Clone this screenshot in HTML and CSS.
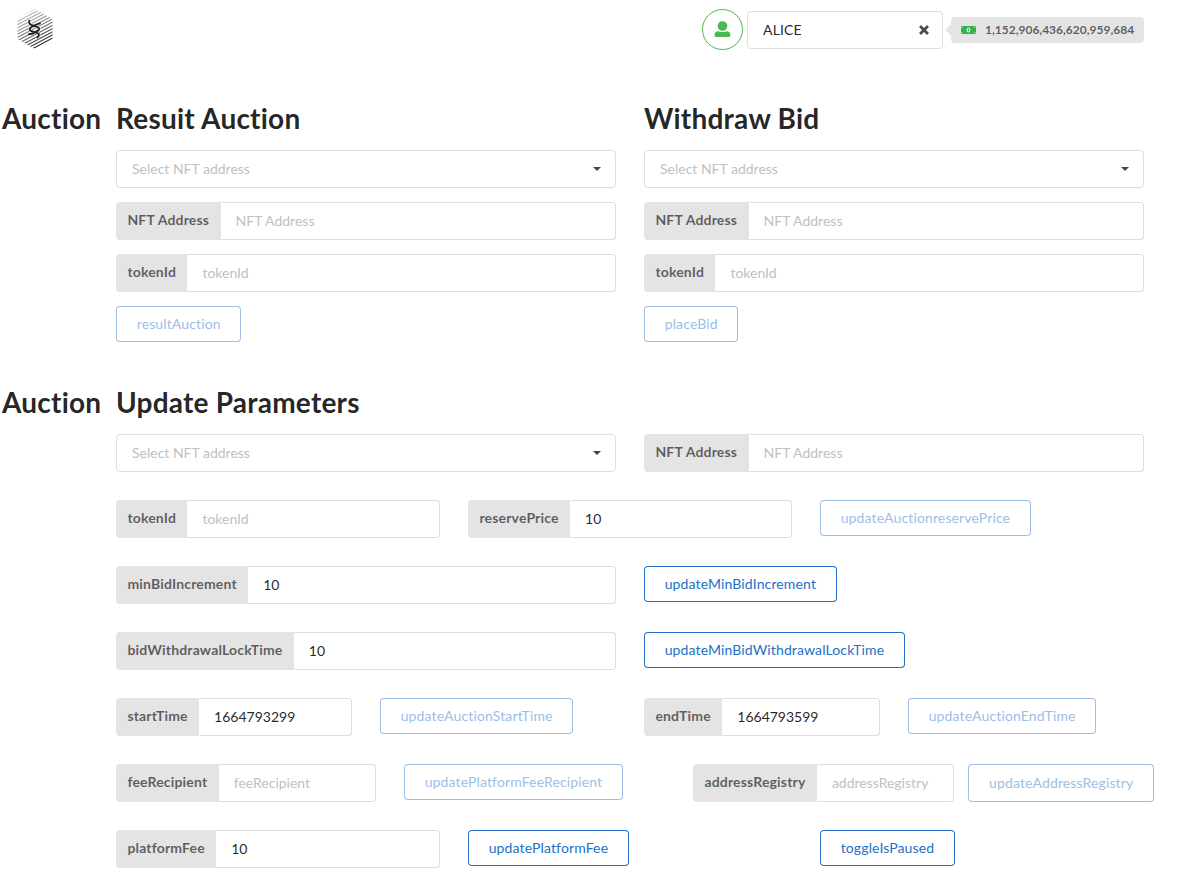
FILE: index.html
```html
<!DOCTYPE html>
<html lang="en">
<head>
<meta charset="utf-8">
<title>Auction</title>
<link rel="stylesheet" href="styles.css">
</head>
<body>
<header class="topbar">
  <svg class="logo" width="38" height="42" viewBox="0 0 38 42">
    <defs>
      <clipPath id="hex"><path d="M19 1 36.500 11V31L19 41 1.500 31V11Z"/></clipPath>
      <linearGradient id="shade" gradientUnits="userSpaceOnUse" x1="8" y1="2" x2="28" y2="40">
        <stop offset="0" stop-color="#ccc"/><stop offset=".45" stop-color="#888"/><stop offset="1" stop-color="#111"/>
      </linearGradient>
    </defs>
    <g clip-path="url(#hex)">
      <path d="M0 11 38-9M0 14.200 38-5.800M0 17.400 38-2.600M0 20.600 38 .6M0 23.800 38 3.800M0 27 38 7M0 30.200 38 10.200M0 33.400 38 13.400M0 36.600 38 16.600M0 39.800 38 19.800M0 43 38 23M0 46.200 38 26.200M0 49.400 38 29.400M0 52.600 38 32.600M0 55.800 38 35.800" stroke="url(#shade)" stroke-width="1.100" fill="none"/>
    </g>
    <g fill="none" stroke-linejoin="round">
      <path d="M13.300 12.700Q12.500 16 16 17.200L21.500 19.200Q24.500 20.800 22 22.700L17 25.500 13 26.300M24 15.200 18.500 17.300 14.500 19.800Q12.500 21.500 15 22.800L21.500 25.200Q24.500 26.500 21.500 29.300" stroke="#fff" stroke-width="3"/>
      <path d="M13.300 12.700Q12.500 16 16 17.200L21.500 19.200Q24.500 20.800 22 22.700L17 25.500 13 26.300M24 15.200 18.500 17.300 14.500 19.800Q12.500 21.500 15 22.800L21.500 25.200Q24.500 26.500 21.500 29.300" stroke="#222" stroke-width="1.900" stroke-linecap="round"/>
    </g>
  </svg>
  <div class="account">
    <span class="avatar">
      <svg width="17" height="17" viewBox="0 0 17 17" fill="#4cb950"><circle cx="8.500" cy="5" r="4.800"/><path d="M.5 14.300C.5 11.500 2 10.200 4.400 10.200Q8.500 12 12.600 10.200C15 10.200 16.500 11.500 16.500 14.300Q16.500 16 15 16H2Q.5 16 .5 14.300Z"/></svg>
    </span>
    <div class="dropdown account-select">
      <span>ALICE</span>
      <svg class="clear" width="10" height="10" viewBox="0 0 10 10"><path d="M2 2 8 8M8 2 2 8" stroke="#4b4b4b" stroke-width="2.800" stroke-linecap="square"/></svg>
    </div>
    <div class="balance">
      <svg width="15" height="8" viewBox="0 0 15 8"><rect width="15" height="8" rx=".7" fill="#2fb344"/><ellipse cx="7.500" cy="4" rx="1.900" ry="2.500" fill="#e5f5e5"/><path d="M7.500 2.700V5.300" stroke="#2fb344"/><path d="M1 2V1H2M13 1H14V2M1 6V7H2M13 7H14V6" fill="none" stroke="#b8e2bd" stroke-width=".8"/></svg>
      <span>1,152,906,436,620,959,684</span>
    </div>
  </div>
</header>

<main>
  <section class="section">
    <h1>Auction</h1>
    <div class="halves">
      <form class="stack">
        <h1>Resuit Auction</h1>
        <div class="dropdown placeholder"><span>Select NFT address</span><i class="caret"></i></div>
        <div class="field"><label>NFT Address</label><input placeholder="NFT Address"></div>
        <div class="field"><label>tokenId</label><input placeholder="tokenId"></div>
        <button type="button" disabled>resultAuction</button>
      </form>
      <form class="stack">
        <h1>Withdraw Bid</h1>
        <div class="dropdown placeholder"><span>Select NFT address</span><i class="caret"></i></div>
        <div class="field"><label>NFT Address</label><input placeholder="NFT Address"></div>
        <div class="field"><label>tokenId</label><input placeholder="tokenId"></div>
        <button type="button" disabled>placeBid</button>
      </form>
    </div>
  </section>

  <section class="section">
    <h1>Auction</h1>
    <div class="parameters">
      <h1>Update Parameters</h1>
      <div class="rows">
        <div class="halves">
          <div class="dropdown placeholder"><span>Select NFT address</span><i class="caret"></i></div>
          <div class="field"><label>NFT Address</label><input placeholder="NFT Address"></div>
        </div>
        <div class="thirds">
          <div class="field"><label>tokenId</label><input placeholder="tokenId"></div>
          <div class="field"><label>reservePrice</label><input value="10"></div>
          <button type="button" disabled>updateAuctionreservePrice</button>
        </div>
        <div class="halves">
          <div class="field"><label>minBidIncrement</label><input value="10"></div>
          <button type="button">updateMinBidIncrement</button>
        </div>
        <div class="halves">
          <div class="field"><label>bidWithdrawalLockTime</label><input value="10"></div>
          <button type="button">updateMinBidWithdrawalLockTime</button>
        </div>
        <div class="quarters">
          <div class="field"><label>startTime</label><input value="1664793299"></div>
          <button type="button" disabled>updateAuctionStartTime</button>
          <div class="field"><label>endTime</label><input value="1664793599"></div>
          <button type="button" disabled>updateAuctionEndTime</button>
        </div>
        <div class="registry">
          <div class="field"><label>feeRecipient</label><input placeholder="feeRecipient"></div>
          <button type="button" disabled>updatePlatformFeeRecipient</button>
          <div class="action">
            <div class="field"><label>addressRegistry</label><input placeholder="addressRegistry"></div>
            <button type="button" disabled>updateAddressRegistry</button>
          </div>
        </div>
        <div class="thirds">
          <div class="field"><label>platformFee</label><input value="10"></div>
          <button type="button">updatePlatformFee</button>
          <button type="button">toggleIsPaused</button>
        </div>
      </div>
    </div>
  </section>
</main>
</body>
</html>
```
FILE: styles.css
```css
* { box-sizing: border-box; }
body {
  margin: 0;
  height: 883px;
  overflow: hidden;
  background: #fff;
  color: rgba(0, 0, 0, .87);
  font: 14px/18px Lato, sans-serif;
  font-variant-ligatures: none;
}
h1 { margin: 0; font-size: 28px; line-height: 36px; font-weight: 700; letter-spacing: .22px; }

.topbar {
  display: flex;
  justify-content: space-between;
  align-items: flex-start;
  width: 1144px;
  height: 100px;
  padding: 8px 0 0 16px;
}
.account { display: flex; align-items: center; height: 43px; }
.avatar {
  display: flex;
  flex: none;
  align-items: center;
  justify-content: center;
  width: 41px;
  height: 41px;
  margin-right: 4px;
  border: 1px solid #4cb950;
  border-radius: 50%;
}
.account .account-select { flex: none; width: 196px; letter-spacing: .15px; }
.clear { margin-right: -1px; }
.balance {
  position: relative;
  display: flex;
  flex: none;
  align-items: center;
  gap: 9px;
  width: 193px;
  height: 26px;
  margin-left: 8px;
  padding-left: 10px;
  border-radius: 4px;
  background: #e4e4e4;
  color: rgba(0, 0, 0, .6);
  font-size: 12px;
  font-weight: 700;
  white-space: nowrap;
}
.balance::before {
  content: "";
  position: absolute;
  left: -4px;
  top: 9px;
  width: 8px;
  height: 8px;
  background: #e4e4e4;
  transform: rotate(45deg);
}

.section {
  display: grid;
  grid-template-columns: 100px 1038px;
  column-gap: 14px;
  padding-left: 2px;
  margin-bottom: 42px;
}
.halves, .thirds, .quarters {
  display: grid;
  column-gap: 28px;
  width: 1028px;
  align-items: start;
  justify-items: start;
}
.halves { grid-template-columns: repeat(2, minmax(0, 1fr)); }
.thirds { grid-template-columns: repeat(3, minmax(0, 1fr)); }
.quarters { grid-template-columns: repeat(4, minmax(0, 1fr)); }
.stack { display: flex; flex-direction: column; align-items: flex-start; gap: 14px; width: 100%; }
.parameters { display: flex; flex-direction: column; gap: 14px; }
.rows { display: flex; flex-direction: column; gap: 28px; }
.rows > div { height: 38px; }
.registry { display: flex; align-items: flex-start; width: 1038px; }
.registry > .field { width: 260px; margin-right: 28px; }
.action { display: flex; gap: 14px; width: 461px; margin-left: auto; }
.action .field { flex: 1; min-width: 0; }
.action button { height: 38px; }

.dropdown {
  display: flex;
  align-items: center;
  justify-content: space-between;
  width: 100%;
  height: 38px;
  padding: 0 14px 0 15px;
  border: 1px solid #dededf;
  border-radius: 4px;
}
.placeholder span { color: #bfbfbf; }
.caret {
  border: 4px solid transparent;
  border-top: 4px solid #444;
  border-bottom: 0;
}
.field { display: flex; width: 100%; height: 38px; }
.field label {
  flex: none;
  padding: 11px 11.4px;
  border-radius: 4px 0 0 4px;
  background: #e4e4e4;
  color: rgba(0, 0, 0, .6);
  font-weight: 700;
  line-height: 14px;
  letter-spacing: .17px;
}
.field input {
  flex: 1;
  min-width: 0;
  padding: 0 14px;
  border: 1px solid #dededf;
  border-left-color: transparent;
  border-radius: 0 4px 4px 0;
  background: #fff;
  color: rgba(0, 0, 0, .87);
  font: inherit;
}
.field input::placeholder { color: #bfbfbf; }
button {
  flex: none;
  height: 36px;
  padding: 0 20.7px;
  border: 0;
  border-radius: 4px;
  background: none;
  box-shadow: inset 0 0 0 1px #2171c7;
  color: #2171c7;
  font: inherit;
  letter-spacing: .13px;
  white-space: nowrap;
}
button:disabled { opacity: .45; }
```
